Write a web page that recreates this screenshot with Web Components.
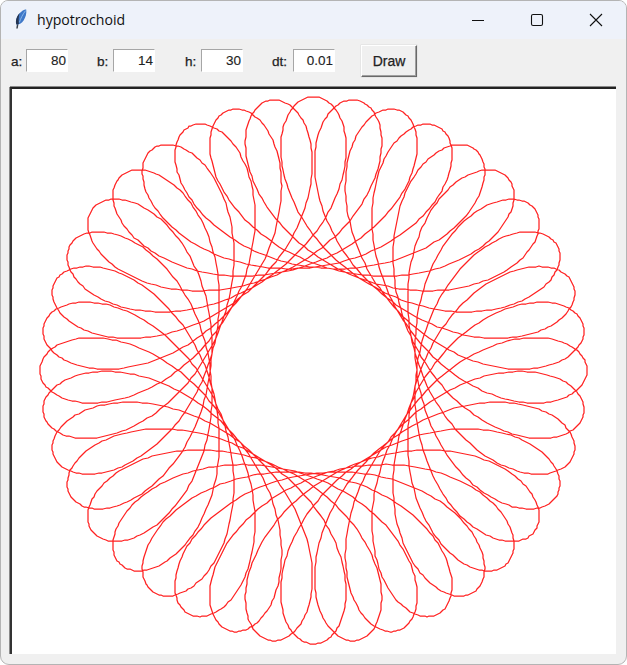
<!DOCTYPE html>
<html lang="en"><head><meta charset="utf-8"><title>hypotrochoid</title>
<style>html,body{margin:0;padding:0;background:#fff;width:627px;height:665px;overflow:hidden}</style>
</head><body>
<tk-window title="hypotrochoid">
  <tk-toolbar>
    <tk-field label="a:" value="80" w="15"></tk-field>
    <tk-field label="b:" value="14" w="16"></tk-field>
    <tk-field label="h:" value="30" w="16"></tk-field>
    <tk-field label="dt:" value="0.01" w="21"></tk-field>
    <tk-button>Draw</tk-button>
  </tk-toolbar>
  <spiro-canvas a="80" b="14" h="30" dt="0.01"></spiro-canvas>
</tk-window>
<script>
const el=(name,html,init)=>customElements.define(name,class extends HTMLElement{
  connectedCallback(){ if(this.shadowRoot) return; const r=this.attachShadow({mode:'open'}); r.innerHTML=html(this); init&&init(r,this); }
});
el('tk-titlebar',h=>`<style>
:host{display:flex;align-items:center;height:38px;background:#eef2fa;flex:none}
.ic{width:18px;height:22px;margin-left:12px;flex:none;display:block}
.t{margin-left:6px;font:14.1px "Open Sans","Noto Sans",sans-serif;color:#111;flex:1;position:relative;top:-.5px}
.b{width:59px;height:38px;display:flex;align-items:center;justify-content:center;flex:none}
svg.w{width:12px;height:12px;display:block;overflow:visible}
</style>
<svg class="ic" viewBox="0 0 18 22">
<path d="M4 19.5L4.8 14.5" stroke="#39404a" stroke-width="1.5" fill="none"/>
<path d="M3.4 15.4C1.8 11.4 4.4 5.6 8.6 2.4C10.2 1.2 11.8.6 13.2.6C13.8 4.2 12.8 8.4 10.6 11.4C8.6 14.2 6 15.8 3.4 15.4Z" fill="#3f78c8"/>
<path d="M3.4 15.4C2.2 11.4 4 7 6.6 4C5.6 7.6 5.4 11.6 6 14.8Z" fill="#253450"/>
<path d="M6.4 13.4C7.6 9.6 9.4 5.8 12.6 1.6" stroke="#8fbcec" stroke-width=".9" fill="none"/>
</svg>
<div class="t">${h.getAttribute('title')}</div>
<div style="flex:none;display:flex;margin-right:1px">
<div class="b"><svg class="w" viewBox="0 0 12 12"><path d="M0 6.5H12" stroke="#111" stroke-width="1.1"/></svg></div>
<div class="b"><svg class="w" viewBox="0 0 12 12"><rect x=".5" y=".5" width="11" height="11" rx="1.6" fill="none" stroke="#111" stroke-width="1.1"/></svg></div>
<div class="b"><svg class="w" viewBox="0 0 12 12"><path d="M0 0L12 12M12 0L0 12" stroke="#111" stroke-width="1.1"/></svg></div>
</div>`);
el('tk-window',()=>`<style>
:host{display:flex;flex-direction:column;box-sizing:border-box;width:627px;height:665px;background:#f0f0f0;border:1px solid #b4b4b4;border-radius:8px 8px 9px 9px;overflow:hidden}
</style><tk-titlebar title="hypotrochoid"></tk-titlebar><slot></slot>`);
el('tk-toolbar',()=>`<style>
:host{display:flex;align-items:center;height:48px;padding:0 0 5px 10px;flex:none;box-sizing:border-box}
::slotted(tk-field:nth-child(1)){margin-right:29px}
::slotted(tk-field:nth-child(2)){margin-right:30px}
::slotted(tk-field:nth-child(3)){margin-right:29px}
::slotted(tk-field:nth-child(4)){margin-right:26px}
</style><slot></slot>`);
el('tk-field',h=>`<style>
:host{display:flex;align-items:center;flex:none}
.l{width:${h.getAttribute('w')}px;font:13.6px "Liberation Sans",sans-serif;color:#222;-webkit-text-stroke:.25px #222;box-sizing:border-box;position:relative;top:.5px}
.e{box-sizing:border-box;width:42px;height:23px;background:#fff;border:1px solid;border-color:#a6a6a6 #fff #fff #a6a6a6;font:13.5px "Liberation Sans",sans-serif;color:#222;-webkit-text-stroke:.12px #222;text-align:right;padding:3px 1px 0 0;line-height:16px}
</style><span class="l">${h.getAttribute('label')}</span><div class="e">${h.getAttribute('value')}</div>`);
el('tk-button',()=>`<style>
:host{display:block;flex:none;box-sizing:border-box;width:56px;height:32px;margin-top:1px;background:#f0f0f0;border:1px solid;border-color:#fff #696969 #696969 #fff;box-shadow:inset -1px -1px 0 #a0a0a0,0 0 0 .4px #d8d8d8;font:14px "Liberation Sans",sans-serif;color:#222;-webkit-text-stroke:.25px #222;text-align:center;line-height:30px}
</style><slot></slot>`);
el('spiro-canvas',()=>`<style>
:host{display:block;flex:none;box-sizing:border-box;width:606px;height:567px;margin-left:9px;background:#fff;border-style:solid;border-width:2px 0 0 2px;border-color:#222 #fff #fff #333;box-shadow:0 -1px 0 #8a8a8a,-1px 0 0 #8a8a8a;overflow:hidden}
svg{display:block;width:604px;height:565px}
polyline{fill:none;stroke:#ff2020;stroke-width:1.25;stroke-linejoin:round}
</style><svg viewBox="0 0 604 565"><polyline></polyline></svg>`,(r,h)=>{
  const a=+h.getAttribute('a'),b=+h.getAttribute('b'),hh=+h.getAttribute('h'),dt=+h.getAttribute('dt');
  const s=2.85,cx=301.5,cy=281.3,k=(a-b)/b,pts=[];
  for(let t=0;t<=2*Math.PI*7+dt;t+=dt){
    const x=(a-b)*Math.cos(t)+hh*Math.cos(k*t), y=(a-b)*Math.sin(t)-hh*Math.sin(k*t);
    pts.push(Math.round(cx+s*x)+','+Math.round(cy+s*y));
  }
  r.querySelector('polyline').setAttribute('points',pts.join(' '));
});
</script>
</body></html>
